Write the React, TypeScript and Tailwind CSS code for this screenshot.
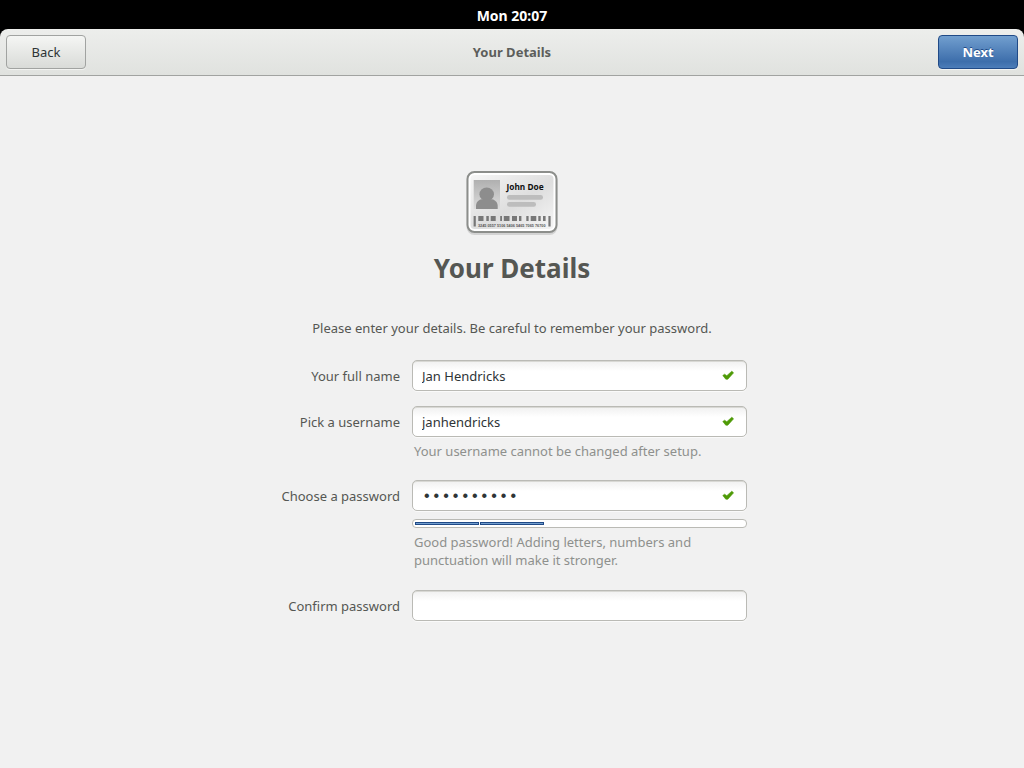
import { useState } from "react";
import type { InputHTMLAttributes, ReactNode } from "react";

function IdCardIcon() {
  const bars: [number, number][] = [
    [14.3, 5.2], [22.3, 2.5], [26.7, 5], [36.2, 1.8], [39.8, 5.7], [48, 5], [55, 2.4], [62.3, 2.3], [66.7, 5.6], [74.3, 2.4], [79, 2.6],
  ];
  return (
    <svg width="96" height="66" viewBox="0 0 96 66" aria-hidden="true">
      <defs>
        <linearGradient id="card" x1="0" y1="0" x2="1" y2="1">
          <stop offset="0" stopColor="#f6f6f6" />
          <stop offset="0.55" stopColor="#dedede" />
          <stop offset="1" stopColor="#f6f6f6" />
        </linearGradient>
        <linearGradient id="photo" x1="0" y1="0" x2="0" y2="1">
          <stop offset="0" stopColor="#b0b0b0" />
          <stop offset="1" stopColor="#dcdcdc" />
        </linearGradient>
      </defs>
      <rect x="2.5" y="3" width="91" height="62" rx="8" fill="#000" opacity="0.12" />
      <rect x="3.5" y="2" width="89" height="60" rx="7" fill="#fff" stroke="#8c8e8b" strokeWidth="2" />
      <rect x="6.5" y="5" width="83" height="54" rx="4" fill="url(#card)" />
      <rect x="9.7" y="10" width="26.300" height="29" fill="url(#photo)" />
      <ellipse cx="22.700" cy="24.300" rx="7.300" ry="6.700" fill="#8d8d8d" />
      <path d="M12 39v-3c0-4 2.500-6 5.500-6.800h10.500c3 .8 5.700 2.800 5.700 6.800v3z" fill="#8d8d8d" />
      <text x="42.500" y="20" fontSize="8.300" fontWeight="700" fill="#111" className="font-['Noto_Sans','Open_Sans',sans-serif]">
        John Doe
      </text>
      <rect x="43" y="25" width="36" height="4.700" rx="2.300" fill="#bdbdbd" />
      <rect x="43" y="32" width="29" height="4.700" rx="2.300" fill="#bdbdbd" />
      <path d="M10.700 46v10.500M85.500 46v10.500" stroke="#777" strokeWidth="2.200" />
      {bars.map(([x, w]) => (
        <rect key={x} x={x} y="46" width={w} height="5" fill="#777" />
      ))}
      <text x="14" y="56.500" fontSize="3.800" fontWeight="700" fill="#555" className="font-['Liberation_Sans',sans-serif]">
        3245 0557 5106 5406 5465 7065 76700
      </text>
    </svg>
  );
}

function CheckIcon() {
  return (
    <svg width="12" height="12" viewBox="0 0 12 12" aria-hidden="true">
      <path d="M.8 5.500 2.600 4.200 4.800 5.700 9.800 1.200 11.600 2.800 5.800 9.200 3.800 9.200z" fill="#4e9a06" stroke="#4e9a06" strokeWidth=".6" strokeLinejoin="round" />
    </svg>
  );
}

type FieldProps = InputHTMLAttributes<HTMLInputElement> & {
  id: string;
  label: string;
  valid?: boolean;
  children?: ReactNode;
};

function Field({ id, label, valid, children, className = "", ...input }: FieldProps) {
  return (
    <>
      <label htmlFor={id} className="text-right leading-8 text-[#555753]">
        {label}
      </label>
      <div>
        <div className="flex h-[31px] items-center rounded-[5px] border border-[#babab5] bg-linear-to-b from-[#f0f0f0] to-white to-35% pr-3 pl-[9px] shadow-[inset_0_1px_0_#d8d8d4,0_1px_0_#fafafa]">
          <input id={id} className={`min-w-0 flex-1 bg-transparent pt-0.5 text-[#2e3436] outline-none ${className}`} {...input} />
          {valid && <CheckIcon />}
        </div>
        {children}
      </div>
    </>
  );
}

export default function App() {
  const [name, setName] = useState("Jan Hendricks");
  const [username, setUsername] = useState("janhendricks");
  const [password, setPassword] = useState("0123456789");
  const [confirmation, setConfirmation] = useState("");

  return (
    <div className="flex min-h-screen flex-col bg-black font-['Noto_Sans','Open_Sans',sans-serif] text-[13px]">
      <div className="flex h-[29px] items-center justify-center pt-[3px] text-sm font-bold text-white">Mon 20:07</div>
      <header className="grid h-[47px] grid-cols-3 items-center rounded-t-lg border-b border-[#a1a3a1] bg-linear-to-b from-[#edeeec] to-[#e0e2df] px-1.5">
        <button className="h-[34px] w-20 rounded border border-[#a1a3a1] bg-linear-to-b from-[#f5f6f4] to-[#d9dbd8] pt-0.5 text-[#2e3436] shadow-[0_1px_0_#f2f3f1]">
          Back
        </button>
        <span className="pt-0.5 text-center font-bold text-[#5c5e5b]">Your Details</span>
        <button className="h-[34px] w-20 justify-self-end rounded border border-[#204a87] bg-linear-to-b from-[#729fcf] via-[#3d6eab] via-80% to-[#4c7db9] pt-0.5 font-bold text-white shadow-[0_1px_0_#f2f3f1] text-shadow-[0_-1px_0_#204a87]">
          Next
        </button>
      </header>
      <main className="flex flex-1 flex-col items-center bg-[#f1f1f1] pt-[94px]">
        <IdCardIcon />
        <h1 className="mt-[14px] text-[26px] leading-9 font-bold text-[#555753]">Your Details</h1>
        <p className="mt-8 leading-5 text-[#555753]">Please enter your details. Be careful to remember your password.</p>
        <form className="mt-[22px] grid grid-cols-[123px_335px] gap-x-3">
          <Field id="full-name" label="Your full name" valid value={name} onChange={(e) => setName(e.target.value)}>
            <div className="h-[15px]" />
          </Field>
          <Field id="username" label="Pick a username" valid value={username} onChange={(e) => setUsername(e.target.value)}>
            <p className="mt-[5px] mb-5 pl-0.5 leading-[18px] text-[#8e908d]">Your username cannot be changed after setup.</p>
          </Field>
          <Field id="password" label="Choose a password" type="password" className="font-['Liberation_Mono',monospace] text-base" valid value={password} onChange={(e) => setPassword(e.target.value)}>
            <div
              role="meter"
              aria-label="Password strength"
              aria-valuemin={0}
              aria-valuemax={5}
              aria-valuenow={2}
              className="mt-2 grid h-[9px] grid-cols-5 gap-px rounded border border-[#babab5] bg-white py-0.5 pr-2 pl-0.5"
            >
              <span className="h-[3px] border border-[#204a87] bg-[#729fcf]" />
              <span className="h-[3px] border border-[#204a87] bg-[#729fcf]" />
            </div>
            <p className="mt-[5px] mb-[21px] pl-0.5 leading-[18px] text-[#8e908d]">
              Good password! Adding letters, numbers and punctuation will make it stronger.
            </p>
          </Field>
          <Field id="confirm" label="Confirm password" type="password" value={confirmation} onChange={(e) => setConfirmation(e.target.value)} />
        </form>
      </main>
    </div>
  );
}
